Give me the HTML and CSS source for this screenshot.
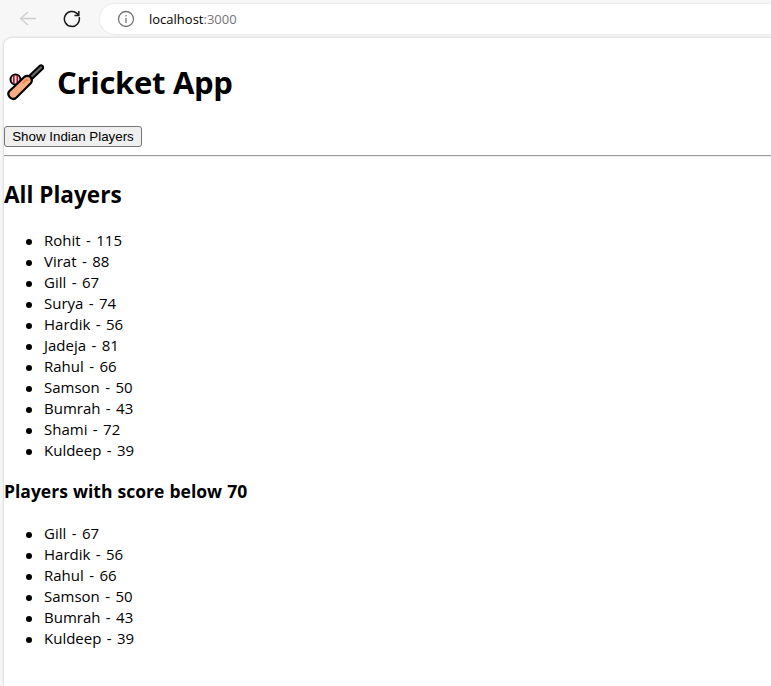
FILE: index.html
```html
<!DOCTYPE html>
<html lang="en">
<head>
<meta charset="utf-8">
<title>Cricket App</title>
<link rel="stylesheet" href="styles.css">
</head>
<body>
<header class="toolbar">
  <svg class="back" width="18" height="16" viewBox="0 0 18 16"><path d="M17 7.500H1.500M9 1L1.500 7.500L9 14"/></svg>
  <svg class="reload" width="18" height="18" viewBox="0 0 18 18"><path d="M16.2 7.2A7.5 7.5 0 1 1 14.2 3.6L15.6 5M15.8 1v4.4H11.4"/></svg>
  <div class="address">
    <svg width="18" height="18" viewBox="0 0 18 18"><circle cx="9" cy="9" r="7.5"/><path d="M9 8v5M9 5v1.6"/></svg>
    <span class="url">localhost<span class="port">:3000</span></span>
  </div>
</header>
<main class="page">
  <h1>
    <svg class="bat" width="38" height="38" viewBox="0 0 38 38">
      <circle cx="9.5" cy="15.5" r="5" fill="#e9e2e5" stroke="#000" stroke-width="2"/>
      <path d="M7.8 11.5v8M11.3 11.5v8" stroke="#b51227" stroke-width="1.7"/>
      <path d="M24 14L35 3.5" stroke="#000" stroke-width="6.2" stroke-linecap="round"/>
      <path d="M24.5 13.5L35 3.5" stroke="#666" stroke-width="2.4" stroke-linecap="round"/>
      <path d="M18.5 12.8Q21 11.2 24.2 12.5Q27 16 25 19L10.500 33.500Q7.500 36.500 4 33.500Q0.800 30 3.500 27Z" fill="#f7ad82" stroke="#000" stroke-width="2.2" stroke-linejoin="round"/>
      <path d="M16.500 19.500L20.500 15.800L22 16.500" stroke="#f08040" stroke-width="1.600" fill="none"/>
    </svg>
    <span>Cricket App</span>
  </h1>
  <button type="button">Show Indian Players</button>
  <hr>
  <h2><span>All Players</span></h2>
  <ul>
    <li>Rohit - 115</li>
    <li>Virat - 88</li>
    <li>Gill - 67</li>
    <li>Surya - 74</li>
    <li>Hardik - 56</li>
    <li>Jadeja - 81</li>
    <li>Rahul - 66</li>
    <li>Samson - 50</li>
    <li>Bumrah - 43</li>
    <li>Shami - 72</li>
    <li>Kuldeep - 39</li>
  </ul>
  <h3><span>Players with score below 70</span></h3>
  <ul>
    <li>Gill - 67</li>
    <li>Hardik - 56</li>
    <li>Rahul - 66</li>
    <li>Samson - 50</li>
    <li>Bumrah - 43</li>
    <li>Kuldeep - 39</li>
  </ul>
</main>
</body>
</html>
```
FILE: styles.css
```css
* { box-sizing: border-box; }
html, body { height: 100%; }
body {
  margin: 0;
  background: #f7f7f7;
  color: #000;
  font-family: "Open Sans", "Noto Sans", sans-serif;
  overflow: hidden;
}
.toolbar {
  display: flex;
  align-items: center;
  height: 38px;
}
.toolbar svg { flex: none; fill: none; stroke-width: 1.3; }
.back { margin-left: 19px; stroke: #cfcfcf; }
.reload { margin-left: 26px; stroke: #1a1a1a; }
.toolbar .reload { stroke-width: 1.5; }
.address {
  display: flex;
  align-items: center;
  flex: 1;
  height: 30px;
  margin-left: 19px;
  padding-left: 17px;
  border-radius: 15px 0 0 15px;
  background: #fff;
  box-shadow: 0 0 3px rgba(0, 0, 0, 0.1);
}
.address svg { stroke: #767676; }
.url {
  margin-left: 14px;
  font-size: 13px;
  line-height: 20px;
}
.port { color: #767676; }
.page {
  height: 648px;
  margin-left: 4px;
  border-radius: 8px 0 0 0;
  background: #fff;
  box-shadow: 0 0 3px rgba(0, 0, 0, 0.22);
}
h1 {
  display: flex;
  align-items: center;
  height: 88px;
  margin: 0;
  padding-left: 2px;
  font-size: 31px;
  line-height: 43px;
  letter-spacing: -0.3px;
}
h1 span { margin-left: 13px; }
.bat { margin-top: 2px; }
button {
  display: block;
  width: 138px;
  height: 21px;
  padding: 0;
  border: 1px solid #767676;
  border-radius: 3px;
  background: #efefef;
  color: #000;
  font: 13.333px/17px "Liberation Sans", Arial, sans-serif;
}
hr {
  height: 2px;
  margin: 8px 0 0;
  border: 0 solid;
  border-width: 1px 0;
  border-color: #9a9a9a #fff #eee;
}
h2 {
  height: 73px;
  margin: 0;
  padding-top: 22px;
  font-size: 22.6px;
  line-height: 32px;
}
ul {
  margin: 0;
  padding-left: 22px;
  list-style: none;
  font-size: 15px;
  line-height: 21px;
  word-spacing: 1.5px;
}
li {
  display: flex;
  align-items: center;
}
li::before {
  content: "";
  width: 6px;
  height: 6px;
  margin: 2px 12px 0 0;
  border-radius: 50%;
  background: #000;
}
h3 {
  height: 62px;
  margin: 0;
  padding-top: 18px;
  font-size: 17.5px;
  line-height: 25px;
  word-spacing: 0.6px;
}
```
